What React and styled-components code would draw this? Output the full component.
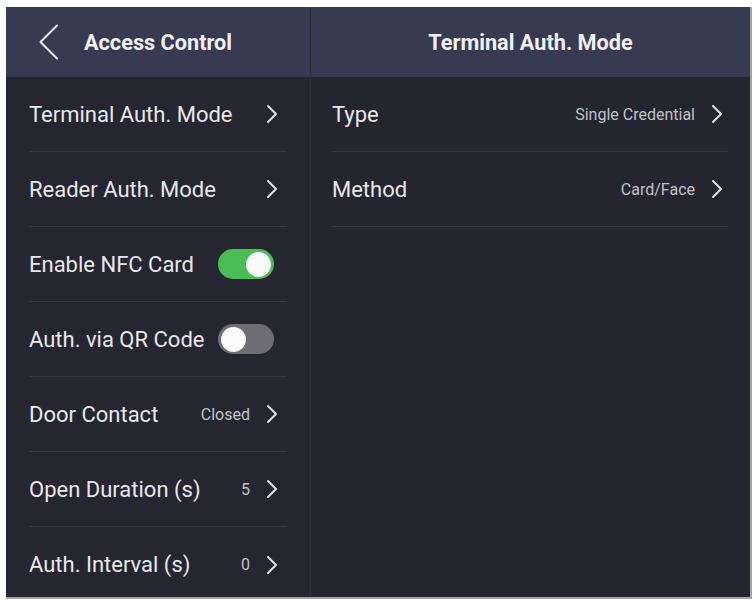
import React from "react";
import styled, { createGlobalStyle } from "styled-components";

const Global = createGlobalStyle`
  html, body { margin: 0; padding: 0; background: #ffffff; }
  body { font-family: Roboto, "Noto Sans", "Liberation Sans", sans-serif; }
  * { box-sizing: border-box; }
`;

const Screen = styled.div`
  margin: 7px 2px 2px 6px;
  width: 746px;
  height: 592px;
  display: grid;
  grid-template-columns: 304px 1fr;
  background: #25262f;
  border-right: 2px solid #a4a4a8;
  border-bottom: 2px solid #a4a4a8;
  overflow: hidden;
`;

const Column = styled.section`
  display: flex;
  flex-direction: column;
  min-width: 0;
  border-left: ${(p) => (p.$divided ? "1px solid #2d2e38" : "none")};
  background: ${(p) => (p.$tint ? "#24252e" : "#25262f")};
`;

const Header = styled.header`
  height: 70px;
  flex: none;
  background: #383a52;
  display: flex;
  align-items: center;
  justify-content: ${(p) => (p.$center ? "center" : "flex-start")};
  padding-left: ${(p) => (p.$center ? "0" : "32px")};
  gap: 24px;
  color: #f0f0f4;
  font-size: 21.7px;
  font-weight: 700;
`;

const BackButton = styled.button`
  border: 0;
  background: none;
  padding: 0;
  width: 22px;
  height: 36px;
  display: flex;
  align-items: center;
  justify-content: center;
  cursor: pointer;
`;

const List = styled.div`
  display: flex;
  flex-direction: column;
  padding: 0 ${(p) => p.$pr}px 0 ${(p) => p.$pl}px;
`;

const Row = styled.div`
  height: 75px;
  flex: none;
  display: flex;
  align-items: center;
  border-bottom: ${(p) => (p.$last ? "none" : "1px solid #363743")};
  padding-right: ${(p) => p.$pr}px;
`;

const Label = styled.span`
  flex: 1;
  color: #e8e8ec;
  font-size: 22px;
  white-space: nowrap;
`;

const Value = styled.span`
  color: #c2c2c8;
  font-size: 16px;
  margin-right: 16px;
  white-space: nowrap;
`;

const Toggle = styled.span`
  width: 56px;
  height: 30px;
  border-radius: 15px;
  margin-right: 5px;
  background: ${(p) => (p.$on ? "#4cbc57" : "#6e6e72")};
  display: flex;
  align-items: center;
  justify-content: ${(p) => (p.$on ? "flex-end" : "flex-start")};
  padding: 0 3px;
`;

const Knob = styled.span`
  width: 25px;
  height: 25px;
  border-radius: 50%;
  background: #fbfbfb;
`;

const Chevron = () => (
  <svg width="12" height="20" viewBox="0 0 12 20" fill="none">
    <path d="M2 2 L10 10 L2 18" stroke="#e2e2e6" strokeWidth="2" strokeLinecap="round" strokeLinejoin="round" />
  </svg>
);

const BackArrow = () => (
  <svg width="22" height="36" viewBox="0 0 22 36" fill="none">
    <path d="M19 1.5 L2.5 18 L19 34.5" stroke="#e4e4ea" strokeWidth="2" strokeLinecap="round" strokeLinejoin="round" />
  </svg>
);

const leftItems = [
  { label: "Terminal Auth. Mode", kind: "link" },
  { label: "Reader Auth. Mode", kind: "link" },
  { label: "Enable NFC Card", kind: "toggle", on: true },
  { label: "Auth. via QR Code", kind: "toggle", on: false },
  { label: "Door Contact", kind: "link", value: "Closed" },
  { label: "Open Duration (s)", kind: "link", value: "5" },
  { label: "Auth. Interval (s)", kind: "link", value: "0" },
];

const rightItems = [
  { label: "Type", value: "Single Credential" },
  { label: "Method", value: "Card/Face" },
];

export default function App() {
  return (
    <>
      <Global />
      <Screen>
        <Column>
          <Header>
            <BackButton aria-label="Back">
              <BackArrow />
            </BackButton>
            Access Control
          </Header>
          <List $pl={23} $pr={23}>
            {leftItems.map((it, i) => (
              <Row key={it.label} $pr={it.kind === "toggle" ? 8 : 9} $last={i === leftItems.length - 1}>
                <Label>{it.label}</Label>
                {it.value && <Value>{it.value}</Value>}
                {it.kind === "toggle" ? (
                  <Toggle $on={it.on}>
                    <Knob />
                  </Toggle>
                ) : (
                  <Chevron />
                )}
              </Row>
            ))}
          </List>
        </Column>
        <Column $divided $tint>
          <Header $center>Terminal Auth. Mode</Header>
          <List $pl={21} $pr={22}>
            {rightItems.map((it) => (
              <Row key={it.label} $pr={5}>
                <Label>{it.label}</Label>
                <Value>{it.value}</Value>
                <Chevron />
              </Row>
            ))}
          </List>
        </Column>
      </Screen>
    </>
  );
}
